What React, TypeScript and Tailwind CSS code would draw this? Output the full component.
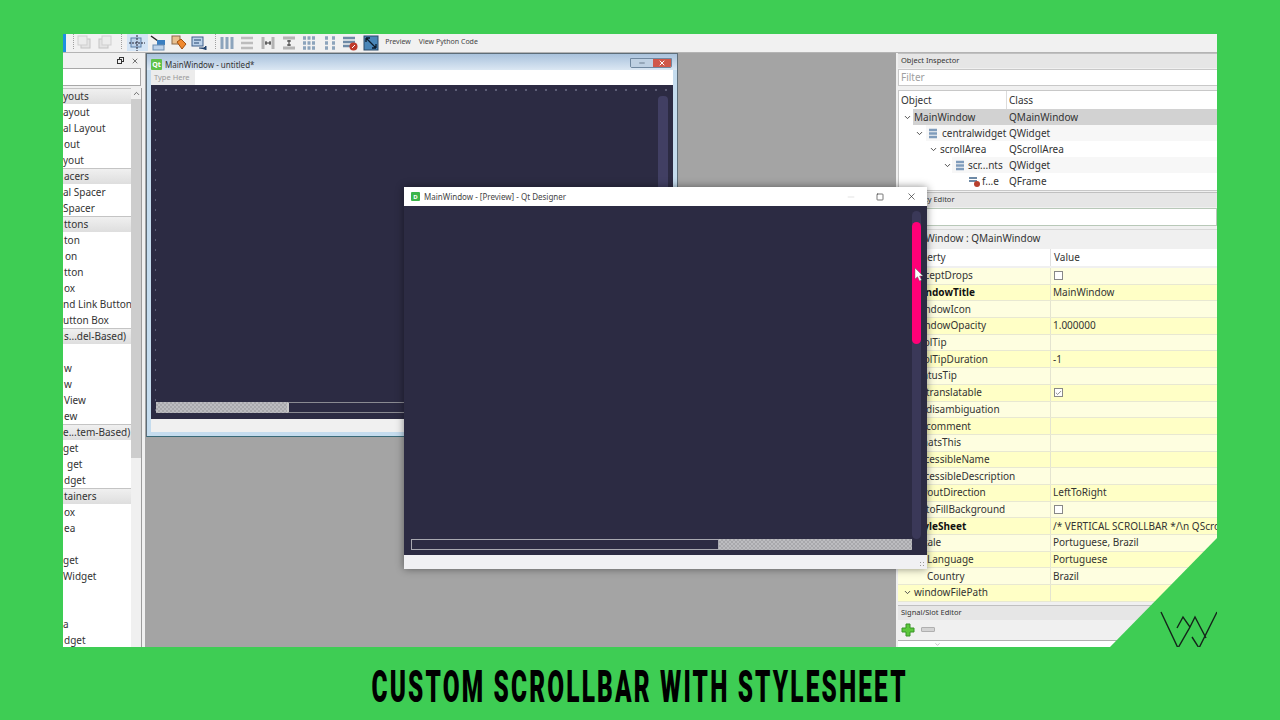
import React from "react";
import { ChevronDown, ChevronUp, Minus, Square, X, Check } from "lucide-react";

const FONT = "font-['Noto_Sans','Open_Sans',sans-serif]";

// text that shows in the clipped widget box, [label, left padding, isCategory]
const widgetRows: [string, number, boolean][] = [
  ["youts", 0, true],
  ["ayout", 0, false],
  ["al Layout", 0, false],
  ["out", 1, false],
  ["yout", 0, false],
  ["acers", 1, true],
  ["al Spacer", 0, false],
  ["Spacer", 0, false],
  ["ttons", 1, true],
  ["ton", 1, false],
  ["on", 2, false],
  ["tton", 1, false],
  ["ox", 1, false],
  ["nd Link Button", 0, false],
  ["utton Box", 0, false],
  ["s...del-Based)", 1, true],
  ["", 1, false],
  ["w", 1, false],
  ["w", 1, false],
  ["View", 1, false],
  ["ew", 1, false],
  ["e...tem-Based)", 0, true],
  ["get", 0, false],
  ["get", 4, false],
  ["dget", 1, false],
  ["tainers", 1, true],
  ["ox", 1, false],
  ["ea", 1, false],
  ["", 1, false],
  ["get", 0, false],
  ["Widget", 0, false],
  ["", 1, false],
  ["", 1, false],
  ["a", 0, false],
  ["dget", 1, false],
];

interface Prop {
  name: string;
  value?: string;
  indent?: number;
  bold?: boolean;
  check?: "off" | "on";
  chevron?: boolean;
}

const props: Prop[] = [
  { name: "acceptDrops", check: "off" },
  { name: "windowTitle", value: "MainWindow", bold: true },
  { name: "windowIcon" },
  { name: "windowOpacity", value: "1.000000" },
  { name: "toolTip" },
  { name: "toolTipDuration", value: "-1" },
  { name: "statusTip" },
  { name: "translatable", check: "on", indent: 12 },
  { name: "disambiguation", indent: 12 },
  { name: "comment", indent: 12 },
  { name: "whatsThis" },
  { name: "accessibleName" },
  { name: "accessibleDescription" },
  { name: "layoutDirection", value: "LeftToRight" },
  { name: "autoFillBackground", check: "off" },
  { name: "styleSheet", value: "/* VERTICAL SCROLLBAR */\\n QScrollBar", bold: true },
  { name: "locale", value: "Portuguese, Brazil" },
  { name: "Language", value: "Portuguese", indent: 13 },
  { name: "Country", value: "Brazil", indent: 13 },
  { name: "windowFilePath", chevron: true },
];

const Sep = () => <div className="w-[1px] h-[15px] border-l border-dotted border-[#a0a0a0]" />;

const Tool = ({ children, active }: { children: React.ReactNode; active?: boolean }) => (
  <div
    className={`w-[20.6px] h-[17px] flex items-center justify-center shrink-0 ${
      active ? "bg-[#d3e4f5]" : ""
    }`}
  >
    <svg width="16" height="16" viewBox="0 0 16 16">
      {children}
    </svg>
  </div>
);

function Toolbar() {
  return (
    <div className="h-[19px] bg-[#f1f1f1] border-b border-[#b4b4b4] flex items-start shrink-0">
      <div className="w-[3px] h-full bg-[#1e90e0]" />
      <div className="ml-[7px]">
        <Sep />
      </div>
      <div className="ml-[1px]" />
      <Tool>
        <rect x="4" y="4" width="9" height="9" fill="#e4e4e4" stroke="#c4c4c4" />
        <rect x="1" y="1" width="9" height="9" fill="#ececec" stroke="#cfcfcf" />
      </Tool>
      <Tool>
        <rect x="1" y="4" width="9" height="9" fill="#e4e4e4" stroke="#c4c4c4" />
        <rect x="4" y="1" width="9" height="9" fill="#ececec" stroke="#cfcfcf" />
      </Tool>
      <div className="ml-[5px] mr-[5px]">
        <Sep />
      </div>
      <Tool active>
        <rect x="2" y="3" width="10" height="9" fill="#bcd2ea" stroke="#5a7fa8" />
        <path d="M0 8h16M8 0v16" stroke="#223" strokeWidth="1" strokeDasharray="2 1" />
      </Tool>
      <Tool>
        <path d="M1 1l7 5" stroke="#222" strokeWidth="1.5" />
        <rect x="7" y="5" width="8" height="5" fill="#3a7ec0" />
        <rect x="3" y="10" width="11" height="5" fill="#bcd2ea" stroke="#6a8cb0" />
      </Tool>
      <Tool>
        <rect x="1" y="1" width="8" height="8" fill="#e8c090" stroke="#8a6a4a" />
        <path d="M6 7l4-3 5 5-4 5z" fill="#f08a30" stroke="#a05010" />
      </Tool>
      <Tool>
        <rect x="1" y="2" width="11" height="9" fill="#bcd2ea" stroke="#40608a" />
        <path d="M3 5h7M3 8h5" stroke="#24456e" />
        <path d="M8 13h5l2-2v4" fill="#24456e" stroke="#24456e" />
      </Tool>
      <div className="ml-[5px] mr-[1px]">
        <Sep />
      </div>
      <Tool>
        <path d="M3 2v12M8 2v12M13 2v12" stroke="#8ca4bc" strokeWidth="3" />
      </Tool>
      <Tool>
        <path d="M2 3h12M2 8h12M2 13h12" stroke="#bcbcbc" strokeWidth="2.5" />
      </Tool>
      <Tool>
        <path d="M3 2v12M13 2v12" stroke="#b4b4b4" strokeWidth="3" />
        <path d="M5 8h6" stroke="#333" />
        <path d="M6 6v4M10 6v4" stroke="#333" />
      </Tool>
      <Tool>
        <path d="M2 3h12M2 13h12" stroke="#b4b4b4" strokeWidth="3" />
        <path d="M8 5v6M6 6h4M6 10h4" stroke="#333" />
      </Tool>
      <Tool>
        <path
          d="M2 3h3M6.5 3h3M11 3h3M2 8h3M6.5 8h3M11 8h3M2 13h3M6.5 13h3M11 13h3"
          stroke="#8ca4bc"
          strokeWidth="3.5"
        />
      </Tool>
      <Tool>
        <path d="M3 3h3M10 3h3M3 8h3M10 8h3M3 13h3M10 13h3" stroke="#8ca4bc" strokeWidth="3.5" />
      </Tool>
      <Tool>
        <path d="M1 3h12M1 7h12M1 11h8" stroke="#6e8aa6" strokeWidth="2.5" />
        <circle cx="11.5" cy="11.5" r="4" fill="#c0392b" />
        <path d="M10 13l3-3" stroke="#fff" />
      </Tool>
      <Tool>
        <rect x="1" y="1" width="14" height="14" fill="#4a86b8" stroke="#2a4a6a" />
        <path d="M3 3l10 10M3 3h4M3 3v4M13 13h-4M13 13v-4" stroke="#0c1a2a" strokeWidth="1.3" fill="none" />
      </Tool>
      <span className="ml-[4px] mt-[4px] text-[7px] text-[#444] leading-[8px]">Preview</span>
      <span className="ml-[8px] mt-[4px] text-[7px] text-[#444] leading-[8px]">View Python Code</span>
    </div>
  );
}

function WidgetBox() {
  return (
    <div className="w-[82px] shrink-0 bg-[#f0f0f0] flex flex-col overflow-hidden">
      <div className="h-[15px] flex items-center justify-end gap-[7px] pr-[6px] shrink-0">
        <svg width="7" height="7" viewBox="0 0 7 7">
          <rect x="2.5" y="0.5" width="4" height="4" fill="none" stroke="#333" />
          <rect x="0.5" y="2.5" width="4" height="4" fill="#f0f0f0" stroke="#333" />
        </svg>
        <X size={8} strokeWidth={2} className="text-[#333]" />
      </div>
      <div className="h-[18px] w-[78px] bg-white border border-[#a8a8a8] border-l-0 shrink-0" />
      <div className="mt-[2px] flex-1 w-[79px] flex border-r border-[#9c9c9c] min-h-0">
        <div className="flex-1 bg-white flex flex-col overflow-hidden">
          {widgetRows.map(([label, pad, cat], i) => (
            <div
              key={i}
              style={{ paddingLeft: pad }}
              className={`h-[16px] shrink-0 flex items-center text-[10px] text-[#333] whitespace-nowrap ${
                cat ? "bg-gradient-to-b from-[#f0f0f0] to-[#dedede] border-t border-[#c4c4c4]" : ""
              }`}
            >
              {label}
            </div>
          ))}
        </div>
        <div className="w-[10px] shrink-0 bg-[#f0f0f0] flex flex-col">
          <div className="h-[11px] flex items-center justify-center">
            <ChevronUp size={9} strokeWidth={2} className="text-[#444]" />
          </div>
          <div className="h-[359px] bg-[#cdcdcd]" />
        </div>
      </div>
    </div>
  );
}

function ObjectInspector() {
  return (
    <>
      <DockTitle>Object Inspector</DockTitle>
      <div className="h-[17px] mt-[1px] bg-white border-y border-l border-[#c8c8c8] flex items-center pl-[2px] text-[10px] text-[#a0a0a0] shrink-0">
        Filter
      </div>
      <div className="mt-[4px] h-[101px] bg-white border border-r-0 border-[#c8c8c8] flex flex-col shrink-0 overflow-hidden text-[10px] text-[#333]">
        <div className="h-[18px] flex items-center shrink-0">
          <span className="w-[108px] pl-[2px] border-r border-[#dcdcdc] h-full flex items-center">Object</span>
          <span className="pl-[2px]">Class</span>
        </div>
        <TreeRow chevronAt={5} textAt={15} selFrom={14} cls="QMainWindow" label="MainWindow" tone="bg-[#d2d2d2]" />
        <TreeRow chevronAt={17} iconAt={29} textAt={43} selFrom={27} cls="QWidget" label="centralwidget" tone="bg-[#f7f7f7]" />
        <TreeRow chevronAt={31} textAt={41} cls="QScrollArea" label="scrollArea" />
        <TreeRow chevronAt={45} iconAt={56} textAt={69} selFrom={53} cls="QWidget" label="scr...nts" tone="bg-[#f7f7f7]" />
        <TreeRow iconAt={70} frame textAt={83} cls="QFrame" label="f...e" />
      </div>
    </>
  );
}

function DockTitle({ children }: { children: React.ReactNode }) {
  return (
    <div className="h-[15px] bg-[#e6e6e6] border-t border-[#c0c0c0] flex items-center pl-[3px] pb-[1px] text-[7.5px] text-[#333] shrink-0">
      {children}
    </div>
  );
}

function TreeRow({
  label,
  cls,
  chevronAt,
  iconAt,
  textAt,
  selFrom,
  tone,
  frame,
}: {
  label: string;
  cls: string;
  chevronAt?: number;
  iconAt?: number;
  textAt: number;
  selFrom?: number;
  tone?: string;
  frame?: boolean;
}) {
  return (
    <div className="h-[16px] shrink-0 relative flex">
      {tone && <div className={`absolute inset-y-0 right-0 ${tone}`} style={{ left: selFrom }} />}
      <div className="w-[108px] relative shrink-0 flex items-center">
        {chevronAt !== undefined && (
          <ChevronDown size={9} strokeWidth={2.5} className="absolute text-[#444]" style={{ left: chevronAt - 1 }} />
        )}
        {iconAt !== undefined && (
          <svg width="11" height="11" viewBox="0 0 11 11" className="absolute" style={{ left: iconAt }}>
            {frame ? (
              <>
                <path d="M0 2h8M0 5h8" stroke="#6e8aa6" strokeWidth="2" />
                <circle cx="8" cy="8" r="3" fill="#b8402e" />
              </>
            ) : (
              <path d="M1 2h8M1 5.5h8M1 9h8" stroke="#7f9cbc" strokeWidth="2.5" />
            )}
          </svg>
        )}
        <span className="absolute whitespace-nowrap" style={{ left: textAt }}>
          {label}
        </span>
      </div>
      <span className="relative pl-[2px] self-center">{cls}</span>
    </div>
  );
}

function PropertyEditor() {
  return (
    <>
      <div className="mt-[1px]">
        <DockTitle>Property Editor</DockTitle>
      </div>
      <div className="h-[18px] mt-[1px] bg-white border border-[#b8c8b8] shrink-0" />
      <div className="h-[17px] mt-[3px] bg-[#f0f0f0] border-t border-[#d8d8d8] flex items-center pl-[4px] text-[10px] text-[#333] shrink-0">
        MainWindow : QMainWindow
      </div>
      <div className="h-[17px] mt-[3px] bg-white flex text-[10px] text-[#333] shrink-0">
        <span className="w-[153px] pl-[7px] flex items-center border-r border-[#e0e0e0]">Property</span>
        <span className="pl-[3px] flex items-center">Value</span>
      </div>
      <div className="mt-[2px] flex flex-col shrink-0">
        {props.map((p, i) => (
          <div
            key={p.name}
            className={`h-[16.7px] flex text-[10px] text-[#333] border-b border-[#e8e8d2] ${
              i % 2 === 0 ? "bg-[#fefee0]" : "bg-[#ffffc6]"
            }`}
          >
            <div
              className={`w-[153px] shrink-0 border-r border-[#e4e4d0] flex items-center whitespace-nowrap overflow-hidden relative ${
                p.bold ? "font-bold text-[#111]" : ""
              }`}
              style={{ paddingLeft: 16 + (p.indent ?? 0) }}
            >
              {p.chevron && (
                <ChevronDown size={9} strokeWidth={2.5} className="absolute left-[5px] text-[#444]" />
              )}
              {p.name}
            </div>
            <div className="flex-1 pl-[2px] flex items-center whitespace-nowrap overflow-hidden">
              {p.check && (
                <span className="w-[9px] h-[9px] ml-[1px] bg-white border border-[#888] flex items-center justify-center">
                  {p.check === "on" && <Check size={8} strokeWidth={2} className="text-[#444]" />}
                </span>
              )}
              {p.value}
            </div>
          </div>
        ))}
      </div>
    </>
  );
}

function SignalSlot() {
  return (
    <>
      <div className="mt-[3px]">
        <DockTitle>Signal/Slot Editor</DockTitle>
      </div>
      <div className="h-[20px] flex items-center pl-[3px] gap-[6px] shrink-0">
        <svg width="14" height="14" viewBox="0 0 14 14">
          <path d="M5 1h4v4h4v4H9v4H5V9H1V5h4z" fill="#5cc83c" stroke="#3a9428" />
        </svg>
        <div className="w-[14px] h-[5px] bg-[#d4d4d4] border border-[#b0b0b0] rounded-[1px]" />
      </div>
      <div className="flex-1 bg-white border-t border-[#b0b0b0] flex justify-center">
        <ChevronDown size={7} className="text-[#999] mr-[240px]" />
      </div>
    </>
  );
}

// the form window behind the preview, as it sits on the designer canvas
function FormWindow() {
  return (
    <div className="absolute left-[83px] top-[19px] w-[532px] h-[384px] flex flex-col border border-[#5d6d78] border-b-[#3a6a78] bg-[#c5dcee]">
      <div className="h-[16px] bg-gradient-to-b from-[#a9c2dc] to-[#dbe7f3] flex items-end pl-[4px] shrink-0">
        <div className="w-[11px] h-[11px] bg-[#5fc24a] rounded-[1px] text-[7px] font-bold text-white flex items-center justify-center leading-none">
          Qt
        </div>
        <span className="ml-[3px] text-[8px] leading-[11px] text-[#333]">MainWindow - untitled*</span>
        <div className="ml-auto mr-[5px] mb-[2px] flex h-[10px] rounded-b-[2px] overflow-hidden border border-[#7088a0]">
          <div className="w-[22px] bg-[#bed0e2] flex items-center justify-center">
            <Minus size={8} className="text-[#456]" />
          </div>
          <div className="w-[18px] bg-[#d0584a] flex items-center justify-center">
            <X size={8} strokeWidth={3} className="text-white" />
          </div>
        </div>
      </div>
      <div className="mx-[4px] flex-1 flex flex-col min-h-0">
        <div className="h-[15px] bg-white shrink-0">
          <div className="w-[44px] h-full bg-[#ececec] text-[7.5px] text-[#999] flex items-center pl-[3px]">
            Type Here
          </div>
        </div>
        <div className="h-[334px] bg-[#2c2b43] bg-[radial-gradient(#5e5e78_0.7px,transparent_0.9px)] bg-[length:10px_10px] flex flex-col shrink-0 p-[5px] pt-[9px] pb-[3px]">
          <div className="flex-1 bg-[#2c2b43] flex flex-col min-h-0">
            <div className="flex-1 flex justify-end pt-[2px]">
              <div className="w-[10px] h-[100px] bg-[#413f63] rounded-[4px]" />
            </div>
            <div className="h-[11px] flex mb-[3px] shrink-0">
              <div className="w-[131px] h-full bg-[repeating-conic-gradient(#a8a8ac_0_25%,#bcbcc0_0_50%)] bg-[length:4px_4px]" />
              <div className="flex-1 border-y border-[#8a8a92] border-l-2 border-l-[#c8c8c8]" />
            </div>
          </div>
        </div>
        <div className="flex-1 bg-[#f0f0f0]" />
      </div>
      <div className="h-[4px] shrink-0" />
    </div>
  );
}

function PreviewWindow() {
  return (
    <div className="absolute left-[341px] top-[153px] w-[523px] h-[382px] flex flex-col bg-[#2c2b43] shadow-[0_0_8px_rgba(0,0,0,0.45)]">
      <div className="h-[19px] bg-white flex items-center pl-[7px] shrink-0">
        <div className="w-[9px] h-[9px] bg-[#3cb54a] rounded-[1px] text-[6px] font-bold text-white flex items-center justify-center leading-none">
          D
        </div>
        <span className="ml-[4px] text-[8px] text-[#444]">MainWindow - [Preview] - Qt Designer</span>
        <div className="ml-auto flex items-center">
          <Minus size={10} strokeWidth={1} className="text-[#bbb] mr-[20px]" />
          <Square size={8} strokeWidth={2} className="text-[#333] mr-[22px]" />
          <X size={11} strokeWidth={1.4} className="text-[#222] mr-[10px]" />
        </div>
      </div>
      <div className="h-[349px] pl-[7px] pr-[6px] pt-[5px] pb-[5px] flex flex-col shrink-0">
        <div className="flex-1 flex justify-end min-h-0">
          <div className="w-[9px] bg-[#3a3858] rounded-[5px] pt-[11px] pb-[195px] flex">
            <div className="w-full h-full bg-[#ff0077] rounded-[5px]" />
          </div>
        </div>
        <div className="h-[11px] flex pr-[9px] shrink-0">
          <div className="w-[308px] border border-[#a8a8b0] bg-[#2c2b43]" />
          <div className="flex-1 bg-[repeating-conic-gradient(#a8a8ac_0_25%,#bcbcc0_0_50%)] bg-[length:4px_4px]" />
        </div>
      </div>
      <div className="flex-1 bg-[#f0f0f3] flex justify-end items-end pr-[2px] pb-[2px]">
        <div className="w-[6px] h-[6px] bg-[radial-gradient(#999_0.6px,transparent_0.8px)] bg-[length:3px_3px]" />
      </div>
    </div>
  );
}

export default function App() {
  return (
    <div className={`w-[1280px] h-[720px] bg-[#3ecd54] flex flex-col overflow-hidden ${FONT}`}>
      <div className="mt-[34px] mx-[63px] h-[613px] relative overflow-hidden flex flex-col shrink-0 bg-[#f0f0f0]">
        <Toolbar />
        <div className="flex-1 flex min-h-0">
          <WidgetBox />
          <div className="flex-1 bg-[#a4a4a4]" />
          <div className="w-[321px] shrink-0 bg-[#f0f0f0] pl-[2px] flex flex-col overflow-hidden">
            <ObjectInspector />
            <PropertyEditor />
            <SignalSlot />
          </div>
        </div>
        <FormWindow />
        <PreviewWindow />
        {/* mouse pointer on the pink handle */}
        <svg width="10" height="15" viewBox="0 0 10 15" className="absolute left-[851px] top-[233px]">
          <path d="M1 1v11l2.5-2.3L5.5 14l2-1-2-4H9z" fill="#fff" stroke="#555" strokeWidth="0.4" />
        </svg>
        {/* green corner with the logo */}
        <div className="absolute right-0 bottom-0 w-[107px] h-[109px] bg-[#3ecd54] [clip-path:polygon(100%_0,100%_100%,0_100%)]" />
        <svg width="60" height="44" viewBox="0 0 60 44" className="absolute left-[1096px] top-[576px]">
          <path
            d="M2 2L19 38L31 17L24 7L18 18M31 17L36 7L47 28M33 27L40 38L58 2"
            fill="none"
            stroke="#14241a"
            strokeWidth="1.4"
          />
        </svg>
      </div>
      <div className="flex-1 flex items-center justify-center pt-[5px]">
        <span className="font-['Roboto','Liberation_Sans',sans-serif] font-black text-[45px] leading-none text-black tracking-[4px] whitespace-nowrap scale-x-[0.542]">
          CUSTOM SCROLLBAR WITH STYLESHEET
        </span>
      </div>
    </div>
  );
}
